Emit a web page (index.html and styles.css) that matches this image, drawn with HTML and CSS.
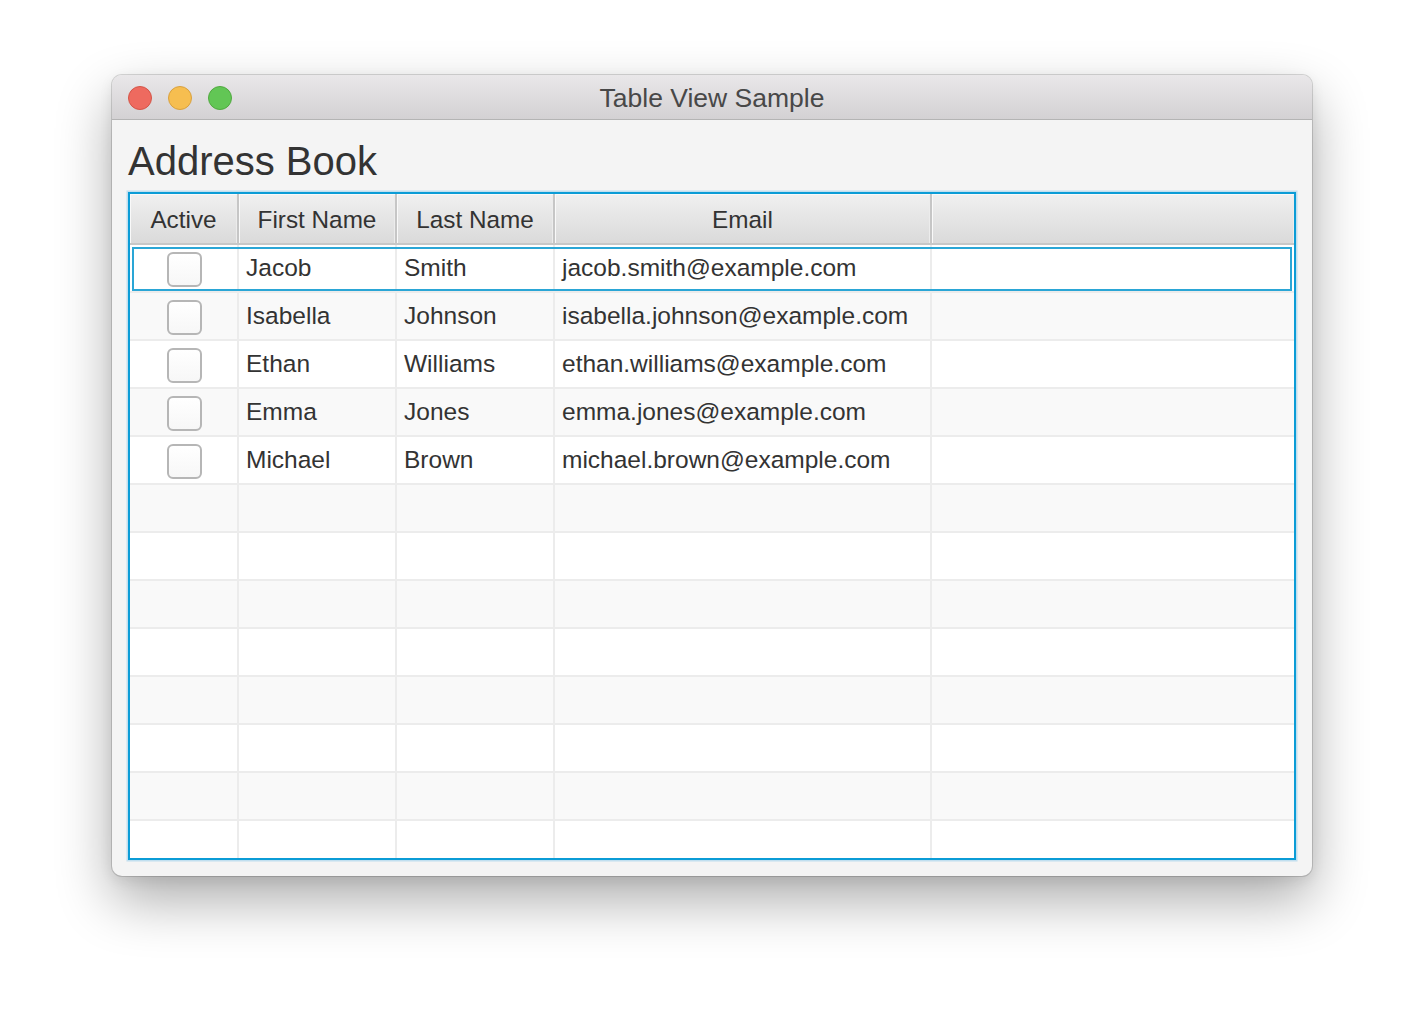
FILE: index.html
```html
<!DOCTYPE html>
<html>
<head>
<meta charset="utf-8">
<title>Table View Sample</title>
<link rel="stylesheet" href="styles.css">
</head>
<body>
<div class="window">
  <div class="titlebar">
    <div class="lights">
      <span class="light red"></span>
      <span class="light yellow"></span>
      <span class="light green"></span>
    </div>
    <div class="title">Table View Sample</div>
    <div></div>
  </div>
  <div class="content">
    <h1 class="heading">Address Book</h1>
    <div class="table">
      <div class="thead">
        <div class="th">Active</div>
        <div class="th">First Name</div>
        <div class="th">Last Name</div>
        <div class="th">Email</div>
        <div class="th last"></div>
      </div>
      <div class="tbody">
        <div class="tr focused">
          <div class="td center"><span class="check"></span></div>
          <div class="td">Jacob</div>
          <div class="td">Smith</div>
          <div class="td">jacob.smith@example.com</div>
          <div class="td last"></div>
        </div>
        <div class="tr">
          <div class="td center"><span class="check"></span></div>
          <div class="td">Isabella</div>
          <div class="td">Johnson</div>
          <div class="td">isabella.johnson@example.com</div>
          <div class="td last"></div>
        </div>
        <div class="tr">
          <div class="td center"><span class="check"></span></div>
          <div class="td">Ethan</div>
          <div class="td">Williams</div>
          <div class="td">ethan.williams@example.com</div>
          <div class="td last"></div>
        </div>
        <div class="tr">
          <div class="td center"><span class="check"></span></div>
          <div class="td">Emma</div>
          <div class="td">Jones</div>
          <div class="td">emma.jones@example.com</div>
          <div class="td last"></div>
        </div>
        <div class="tr">
          <div class="td center"><span class="check"></span></div>
          <div class="td">Michael</div>
          <div class="td">Brown</div>
          <div class="td">michael.brown@example.com</div>
          <div class="td last"></div>
        </div>
        <div class="tr"><div class="td"></div><div class="td"></div><div class="td"></div><div class="td"></div><div class="td last"></div></div>
        <div class="tr"><div class="td"></div><div class="td"></div><div class="td"></div><div class="td"></div><div class="td last"></div></div>
        <div class="tr"><div class="td"></div><div class="td"></div><div class="td"></div><div class="td"></div><div class="td last"></div></div>
        <div class="tr"><div class="td"></div><div class="td"></div><div class="td"></div><div class="td"></div><div class="td last"></div></div>
        <div class="tr"><div class="td"></div><div class="td"></div><div class="td"></div><div class="td"></div><div class="td last"></div></div>
        <div class="tr"><div class="td"></div><div class="td"></div><div class="td"></div><div class="td"></div><div class="td last"></div></div>
        <div class="tr"><div class="td"></div><div class="td"></div><div class="td"></div><div class="td"></div><div class="td last"></div></div>
        <div class="tr"><div class="td"></div><div class="td"></div><div class="td"></div><div class="td"></div><div class="td last"></div></div>
      </div>
    </div>
  </div>
</div>
</body>
</html>
```

FILE: styles.css
```css
* { box-sizing: border-box; }

html, body {
  margin: 0;
  padding: 0;
  background: #ffffff;
}

body {
  width: 1424px;
  height: 1024px;
  padding: 75px 0 0 112px;
  font-family: "Liberation Sans", Arial, sans-serif;
  color: #333333;
  overflow: hidden;
}

.window {
  width: 1200px;
  height: 801px;
  border-radius: 10px;
  background: #f4f4f4;
  box-shadow: 0 0 0 1px rgba(0,0,0,0.14), 0 24px 55px rgba(0,0,0,0.33), 0 4px 14px rgba(0,0,0,0.08);
  overflow: hidden;
}

.titlebar {
  height: 45px;
  display: grid;
  grid-template-columns: 1fr auto 1fr;
  align-items: center;
  background: linear-gradient(#e9e7e9, #d3d1d3);
  border-bottom: 1px solid #b4b4b4;
  padding: 0 16px;
}

.lights {
  display: flex;
  gap: 16px;
  align-items: center;
  padding-top: 1px;
}

.light {
  width: 24px;
  height: 24px;
  border-radius: 50%;
  display: block;
}
.red { background: #ee6a5f; border: 1px solid #d45548; }
.yellow { background: #f6be50; border: 1px solid #d9a13f; }
.green { background: #62c655; border: 1px solid #51a940; }

.title {
  font-size: 26.5px;
  color: #484848;
  padding-top: 3px;
}

.content {
  padding: 17px 16px 16px 16px;
}

.heading {
  margin: 0 0 7px 0;
  font-size: 40px;
  font-weight: normal;
  line-height: 48px;
  height: 48px;
  color: #333333;
}

.table {
  width: 1168px;
  height: 668px;
  border: 2px solid #0b9cd6;
  box-shadow: 0 0 0 1.5px rgba(60,170,225,0.28);
  background: #ffffff;
  overflow: hidden;
}

.thead, .tr {
  display: grid;
  grid-template-columns: 109px 158px 158px 377px 362px;
}

.thead {
  height: 51px;
  border-bottom: 2px solid #c7c7c7;
}

.th {
  display: flex;
  align-items: center;
  justify-content: center;
  font-size: 24.3px;
  color: #333333;
  background: linear-gradient(#f0f0f0, #dadada);
  border-right: 2px solid #c6c6c6;
  box-shadow: inset 1px 1px 0 #f9f9f9, inset -1px 0 0 #ececec;
  padding-top: 2px;
}

.th.last { border-right: none; }

.tbody {
  height: 613px;
  overflow: hidden;
}

.tr {
  height: 48px;
  border-bottom: 2px solid #ececec;
  background: #ffffff;
  position: relative;
}

.tr:nth-child(even) { background: #f9f9f9; }

.tr.focused::after {
  content: "";
  position: absolute;
  left: 2px;
  right: 2px;
  top: 2px;
  bottom: 0;
  border: 2px solid #2aa6d6;
  pointer-events: none;
}

.td {
  display: flex;
  align-items: center;
  padding-left: 7px;
  font-size: 24.5px;
  color: #333333;
  border-right: 2px solid #ececec;
  white-space: nowrap;
}

.td.last { border-right: none; }

.td.center {
  justify-content: center;
  padding-left: 0;
  padding-top: 2px;
}

.check {
  display: block;
  width: 35px;
  height: 35px;
  border: 2px solid #b6b6b6;
  border-radius: 6px;
  background: linear-gradient(#ffffff, #f7f7f7);
  margin-left: 1px;
}
```
